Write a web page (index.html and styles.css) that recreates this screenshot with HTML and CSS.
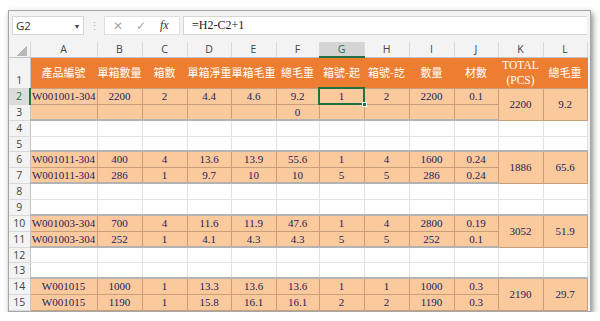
FILE: index.html
```html
<!doctype html>
<html lang="zh-Hant">
    <head>
        <meta charset="UTF-8" />
        <meta name="viewport" content="width=device-width, initial-scale=1.0" />
        <title>裝箱單 - Excel</title>
        <link rel="stylesheet" href="styles.css">
    </head>
    <body>
        <div class="window">
            <div class="formula-bar">
                <div class="name-box">
                    <span>G2</span>
                    <span class="caret">▾</span>
                </div>
                <div class="grip">⋮</div>
                <div class="fx-buttons">
                    <span class="btn">✕</span>
                    <span class="btn">✓</span>
                    <span class="fx">fx</span>
                </div>
                <div class="formula">=H2-C2+1</div>
            </div>

            <table class="sheet">
                <colgroup>
                    <col class="c-rh">
                    <col class="c-a">
                    <col class="c-n"><col class="c-n"><col class="c-d">
                    <col class="c-n"><col class="c-f"><col class="c-n">
                    <col class="c-n"><col class="c-n"><col class="c-d">
                    <col class="c-n"><col class="c-d">
                </colgroup>
                <thead>
                    <tr class="letters">
                        <th class="corner"></th>
                        <th>A</th><th>B</th><th>C</th><th>D</th><th>E</th><th>F</th>
                        <th class="sel">G</th><th>H</th><th>I</th><th>J</th><th>K</th><th>L</th>
                    </tr>
                </thead>
                <tbody>
                    <tr class="head">
                        <td class="rh bottom">1</td>
                        <td>產品編號</td>
                        <td>單箱數量</td>
                        <td>箱數</td>
                        <td>單箱淨重</td>
                        <td>單箱毛重</td>
                        <td>總毛重</td>
                        <td>箱號-起</td>
                        <td>箱號-訖</td>
                        <td>數量</td>
                        <td>材數</td>
                        <td class="latin">TOTAL<br>(PCS)</td>
                        <td>總毛重</td>
                    </tr>

                    <tr class="data">
                        <td class="rh sel">2</td>
                        <td>W001001-304</td><td>2200</td><td>2</td><td>4.4</td><td>4.6</td><td>9.2</td>
                        <td class="active">1<span class="handle"></span></td><td>2</td><td>2200</td><td>0.1</td>
                        <td rowspan="2">2200</td><td rowspan="2">9.2</td>
                    </tr>
                    <tr class="data end">
                        <td class="rh">3</td>
                        <td></td><td></td><td></td><td></td><td></td><td>0</td>
                        <td></td><td></td><td></td><td></td>
                    </tr>
                    <tr class="blank">
                        <td class="rh">4</td>
                        <td></td><td></td><td></td><td></td><td></td><td></td>
                        <td></td><td></td><td></td><td></td><td></td><td></td>
                    </tr>
                    <tr class="blank short">
                        <td class="rh">5</td>
                        <td></td><td></td><td></td><td></td><td></td><td></td>
                        <td></td><td></td><td></td><td></td><td></td><td></td>
                    </tr>

                    <tr class="data start">
                        <td class="rh">6</td>
                        <td>W001011-304</td><td>400</td><td>4</td><td>13.6</td><td>13.9</td><td>55.6</td>
                        <td>1</td><td>4</td><td>1600</td><td>0.24</td>
                        <td rowspan="2">1886</td><td rowspan="2">65.6</td>
                    </tr>
                    <tr class="data end">
                        <td class="rh">7</td>
                        <td>W001011-304</td><td>286</td><td>1</td><td>9.7</td><td>10</td><td>10</td>
                        <td>5</td><td>5</td><td>286</td><td>0.24</td>
                    </tr>
                    <tr class="blank">
                        <td class="rh">8</td>
                        <td></td><td></td><td></td><td></td><td></td><td></td>
                        <td></td><td></td><td></td><td></td><td></td><td></td>
                    </tr>
                    <tr class="blank">
                        <td class="rh">9</td>
                        <td></td><td></td><td></td><td></td><td></td><td></td>
                        <td></td><td></td><td></td><td></td><td></td><td></td>
                    </tr>

                    <tr class="data start">
                        <td class="rh">10</td>
                        <td>W001003-304</td><td>700</td><td>4</td><td>11.6</td><td>11.9</td><td>47.6</td>
                        <td>1</td><td>4</td><td>2800</td><td>0.19</td>
                        <td rowspan="2">3052</td><td rowspan="2">51.9</td>
                    </tr>
                    <tr class="data end">
                        <td class="rh">11</td>
                        <td>W001003-304</td><td>252</td><td>1</td><td>4.1</td><td>4.3</td><td>4.3</td>
                        <td>5</td><td>5</td><td>252</td><td>0.1</td>
                    </tr>
                    <tr class="blank short">
                        <td class="rh">12</td>
                        <td></td><td></td><td></td><td></td><td></td><td></td>
                        <td></td><td></td><td></td><td></td><td></td><td></td>
                    </tr>
                    <tr class="blank">
                        <td class="rh">13</td>
                        <td></td><td></td><td></td><td></td><td></td><td></td>
                        <td></td><td></td><td></td><td></td><td></td><td></td>
                    </tr>

                    <tr class="data start">
                        <td class="rh">14</td>
                        <td>W001015</td><td>1000</td><td>1</td><td>13.3</td><td>13.6</td><td>13.6</td>
                        <td>1</td><td>1</td><td>1000</td><td>0.3</td>
                        <td rowspan="2">2190</td><td rowspan="2">29.7</td>
                    </tr>
                    <tr class="data">
                        <td class="rh">15</td>
                        <td>W001015</td><td>1190</td><td>1</td><td>15.8</td><td>16.1</td><td>16.1</td>
                        <td>2</td><td>2</td><td>1190</td><td>0.3</td>
                    </tr>
                </tbody>
            </table>
        </div>
    </body>
</html>
```

FILE: styles.css
```css
* {
    margin: 0;
    padding: 0;
    box-sizing: border-box;
}

body {
    background: #ffffff;
    font-family: "Liberation Serif", "Noto Sans CJK TC", serif;
}

.window {
    width: 583px;
    margin: 10px 0 0 8px;
    padding-right: 3px;
    background: #f3f3f3;
    border: 1px solid #a6a6a6;
    box-shadow: 2px 3px 6px rgba(0, 0, 0, 0.45);
}

/* Barre de formule */
.formula-bar {
    height: 31px;
    display: flex;
    align-items: flex-start;
    padding-top: 5px;
    font-family: "Open Sans", "Liberation Sans", sans-serif;
}

.name-box {
    width: 72px;
    height: 19px;
    margin-left: 3px;
    background: #ffffff;
    border: 1px solid #d6d6d6;
    display: flex;
    align-items: center;
    justify-content: space-between;
    padding: 0 4px 0 3px;
    font-size: 11.5px;
    color: #333333;
}

.caret {
    font-size: 8px;
    color: #444444;
}

.grip {
    width: 20px;
    text-align: center;
    line-height: 19px;
    font-size: 11px;
    color: #b0b0b0;
}

.fx-buttons {
    width: 76px;
    height: 19px;
    background: #ffffff;
    border: 1px solid #e0e0e0;
    display: flex;
    align-items: center;
    padding-left: 8px;
    gap: 13px;
    font-size: 12px;
}

.btn {
    color: #a8a8a8;
}

.fx {
    font-family: "Liberation Serif", serif;
    font-style: italic;
    color: #333333;
    margin-left: 1px;
}

.formula {
    flex: 1;
    height: 19px;
    margin-left: 3px;
    background: #ffffff;
    border: 1px solid #d6d6d6;
    border-right: none;
    padding-left: 8px;
    line-height: 17px;
    font-family: "Liberation Serif", serif;
    font-size: 12px;
    color: #222222;
}

/* Feuille */
.sheet {
    width: 578px;
    border-collapse: collapse;
    table-layout: fixed;
    background: #ffffff;
}

.c-rh { width: 21px; }
.c-a { width: 67px; }
.c-n { width: 45px; }
.c-d { width: 44px; }
.c-f { width: 43px; }

.sheet td {
    padding: 0;
    text-align: center;
    white-space: nowrap;
    overflow: visible;
    font-size: 11px;
    line-height: 14px;
    color: #23205c;
    border: 1px solid #e1e1e1;
}

.letters th {
    height: 15px;
    background: #f3f3f3;
    font-family: "Open Sans", "Liberation Sans", sans-serif;
    font-weight: normal;
    font-size: 10.5px;
    line-height: 13px;
    color: #444444;
    border-right: 1px solid #d9d9d9;
    border-bottom: 1px solid #c4c4c4;
}

.letters th.sel {
    background: #d4d4d4;
    color: #217346;
    border-bottom: 2px solid #217346;
}

.corner {
    background:
        linear-gradient(to bottom right, transparent 50%, #b9b9b9 50%)
        no-repeat right 3px bottom 1px / 11px 10px,
        #f3f3f3 !important;
}

.sheet td.rh {
    background: #f3f3f3;
    font-family: "Open Sans", "Liberation Sans", sans-serif;
    font-size: 10.5px;
    color: #444444;
    border: none;
    border-bottom: 1px solid #d9d9d9;
    border-right: 1px solid #c4c4c4;
}

.sheet td.rh.sel {
    color: #217346;
    background: #dcdcdc;
    border-right: 2px solid #217346;
}

.sheet td.rh.bottom {
    vertical-align: bottom;
}

/* Ligne d'en-tête */
.head {
    height: 31px;
}

.head td {
    background: #ed7d31;
    color: #ffffff;
    font-family: "Noto Sans CJK TC", sans-serif;
    font-size: 11px;
    line-height: 15px;
    border-color: #ed7d31;
    border-bottom-color: #c99f79;
}

.head td.latin {
    font-family: "Liberation Serif", serif;
    font-size: 11.5px;
    line-height: 15px;
}

/* Lignes remplies */
.data,
.blank {
    height: 16px;
}

.blank.short {
    height: 15px;
}

.data td {
    background: #fbca9c;
    border-color: #c99f79;
}

.data.start td {
    border-top: 2px solid #b3b3b3;
}

.data.end td {
    border-bottom: 2px solid #b3b3b3;
}

.data.start td.rh,
.data.end td.rh {
    border-top: none;
    border-bottom: 1px solid #d9d9d9;
}

.sheet td.active {
    position: relative;
    outline: 2px solid #217346;
    outline-offset: -1px;
}

.handle {
    position: absolute;
    right: -3px;
    bottom: -3px;
    width: 5px;
    height: 5px;
    background: #217346;
    border: 1px solid #ffffff;
}
```
